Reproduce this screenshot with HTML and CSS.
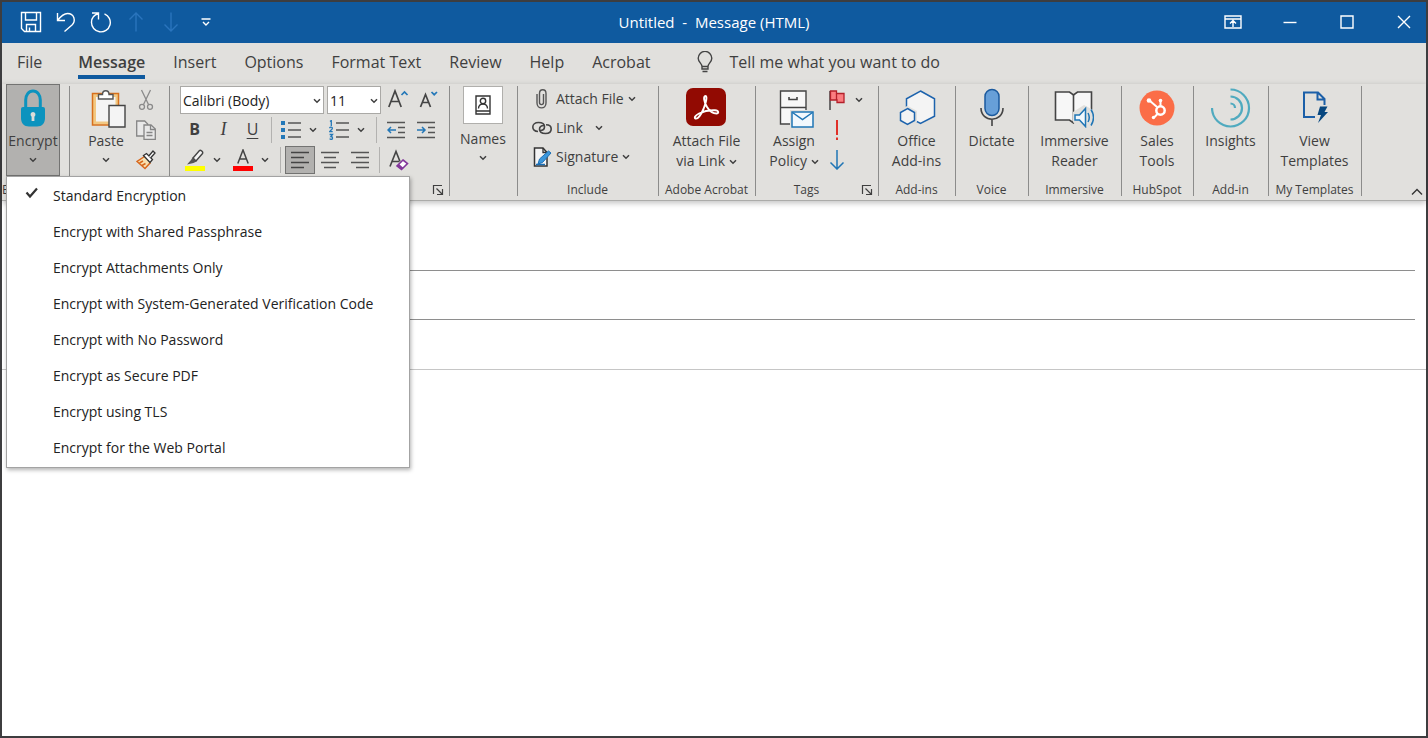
FILE: index.html
```html
<!DOCTYPE html>
<html lang="en">
<head>
    <meta charset="UTF-8">
    <meta name="viewport" content="width=device-width, initial-scale=1.0">
    <title>Untitled - Message (HTML)</title>
    <link rel="stylesheet" href="styles.css">
</head>
<body>
    <svg class="symbols" width="0" height="0" aria-hidden="true">
        <symbol id="chevron" viewBox="0 0 8 6"><path d="M1 1.2l3 3 3-3" fill="none" stroke="currentColor" stroke-width="1.5"/></symbol>
        <symbol id="launcher" viewBox="0 0 12 12"><path d="M1.5 10V1.500H10M4.500 4.500l5.500 5.500M10.500 5v5.500H5" fill="none" stroke="currentColor" stroke-width="1.200"/></symbol>
    </svg>

    <div class="window">
        <header class="titlebar">
            <div class="quick-access">
                <button aria-label="Save"><svg width="22" height="22" viewBox="0 0 22 22"><path d="M1.500 1.500h19v19H4.500l-3-3zM5.500 1.500v7.500h11V1.500M6.500 20.500v-7h9v7M9.500 20v-3.500" /></svg></button>
                <button aria-label="Undo"><svg width="22" height="22" viewBox="0 0 22 22"><path d="M2.500 2v7.500H10M2.500 9.500C6 5 9 2.500 12.500 2.500c7 0 8.500 7.500 4.500 11.500l-7.500 6.500"/></svg></button>
                <button aria-label="Redo"><svg width="22" height="22" viewBox="0 0 22 22"><path d="M2 2h6.500v6.500M8.500 2.500C4 4 1.500 7.500 1.500 11.200a9.400 9.400 0 1 0 13-8.400"/></svg></button>
                <button class="disabled" aria-label="Previous item" disabled><svg width="22" height="22" viewBox="0 0 22 22"><path d="M11 20.500V2M4.500 8.500L11 2l6.500 6.500"/></svg></button>
                <button class="disabled" aria-label="Next item" disabled><svg width="22" height="22" viewBox="0 0 22 22"><path d="M11 1.500V20M4.500 13.500L11 20l6.500-6.500"/></svg></button>
                <button aria-label="Customize toolbar"><svg width="10" height="8" viewBox="0 0 10 8"><path d="M.5 1h9M2 4l3 3 3-3"/></svg></button>
            </div>
            <h1 class="title">Untitled &nbsp;-&nbsp; Message (HTML)</h1>
            <div class="window-controls">
                <button aria-label="Ribbon display options"><svg width="18" height="14" viewBox="0 0 18 14"><path d="M1 1h16v12H1zM1 4h16M9 12V6M6 8.500l3-3 3 3"/></svg></button>
                <button aria-label="Minimize"><svg width="14" height="14" viewBox="0 0 14 14"><path d="M.5 7.500h13"/></svg></button>
                <button aria-label="Maximize"><svg width="14" height="14" viewBox="0 0 14 14"><path d="M1 1h12v12H1z"/></svg></button>
                <button aria-label="Close"><svg width="14" height="14" viewBox="0 0 14 14"><path d="M1 1l12 12M13 1L1 13"/></svg></button>
            </div>
        </header>

        <nav class="tabs">
            <a class="tab file" href="#">File</a>
            <a class="tab active" href="#">Message</a>
            <a class="tab" href="#">Insert</a>
            <a class="tab" href="#">Options</a>
            <a class="tab" href="#">Format Text</a>
            <a class="tab" href="#">Review</a>
            <a class="tab" href="#">Help</a>
            <a class="tab" href="#">Acrobat</a>
            <a class="tell-me" href="#">
                <svg width="16" height="22" viewBox="0 0 16 22" fill="none" stroke="#444" stroke-width="1.400"><path d="M5 15.500c0-3-3.800-4.500-3.800-8.300a6.800 6.800 0 0 1 13.600 0c0 3.800-3.800 5.300-3.800 8.300zM5 15.500V18h6v-2.500M5.500 20.500h5"/></svg>
                Tell me what you want to do
            </a>
        </nav>

        <div class="ribbon">
            <section class="group encrypt-group">
                <div class="tools">
                    <button class="big-button pressed">
                        <svg class="big-icon" viewBox="0 0 40 40"><path d="M12.700 21v-9c0-5 3-9 7.300-9s7.300 4 7.300 9v9" fill="none" stroke="#0c93be" stroke-width="3"/><path d="M10 19h20a2 2 0 0 1 2 2v9c0 5-3 8.500-8 8.500h-8c-5 0-8-3.500-8-8.500v-9a2 2 0 0 1 2-2z" fill="#0c93be"/><path d="M20 24a2.600 2.600 0 0 1 1.400 4.700V33h-2.800v-4.300A2.600 2.600 0 0 1 20 24z" fill="#dcdcd8"/></svg>
                        <span>Encrypt</span>
                        <svg class="chevron below"><use href="#chevron"/></svg>
                    </button>
                </div>
                <div class="group-label">E</div>
                <div class="menu" role="menu">
                    <button class="menu-item" role="menuitem"><svg width="14" height="12" viewBox="0 0 14 12"><path d="M1.500 5.500l3.500 4L12 1.500" fill="none" stroke="#333" stroke-width="2.200"/></svg>Standard Encryption</button>
                    <button class="menu-item" role="menuitem">Encrypt with Shared Passphrase</button>
                    <button class="menu-item" role="menuitem">Encrypt Attachments Only</button>
                    <button class="menu-item" role="menuitem">Encrypt with System-Generated Verification Code</button>
                    <button class="menu-item" role="menuitem">Encrypt with No Password</button>
                    <button class="menu-item" role="menuitem">Encrypt as Secure PDF</button>
                    <button class="menu-item" role="menuitem">Encrypt using TLS</button>
                    <button class="menu-item" role="menuitem">Encrypt for the Web Portal</button>
                </div>
            </section>

            <section class="group clipboard-group">
                <div class="tools">
                    <button class="big-button">
                        <svg class="big-icon" viewBox="0 0 40 40"><path d="M8.500 7.500h22.500v27.500H8.500z" fill="#f4f4f4" stroke="#f2c882" stroke-width="3"/><path d="M6.500 5.500h26v31.500h-26z" fill="none" stroke="#d8701c" stroke-width="1.500"/><path d="M12.500 11V6.500h4c0-5 6.500-5 6.500 0h4V11z" fill="#fff" stroke="#555" stroke-width="1.400"/><path d="M23 17.500h16v21.500H23z" fill="#f4f4f4" stroke="#444" stroke-width="1.400"/></svg>
                        <span>Paste</span>
                        <svg class="chevron below"><use href="#chevron"/></svg>
                    </button>
                    <div class="small-column">
                        <button class="icon-button" aria-label="Cut"><svg width="20" height="22" viewBox="0 0 20 22" fill="none" stroke="#8a8a8a" stroke-width="1.300"><path d="M5.500 1l7 14.500M14.500 1l-7 14.500"/><circle cx="6" cy="17.800" r="2.500"/><circle cx="14" cy="17.800" r="2.500"/></svg></button>
                        <button class="icon-button" aria-label="Copy"><svg width="20" height="20" viewBox="0 0 20 20" fill="#e8e8e8" stroke="#858585" stroke-width="1.300"><path d="M.7 1h8l3 3v12h-11z"/><path d="M8 5h7l4.300 4v10.300H8z"/><path d="M14.500 5v4.500h4.800M10.500 12.500h6M10.500 15.500h6" fill="none"/></svg></button>
                        <button class="icon-button" aria-label="Format painter"><svg width="20" height="20" viewBox="0 0 20 20"><path d="M8.500 6.500L1 11.500l8 7 5.500-6" fill="#f8e0b0" stroke="#d8671c" stroke-width="1.500"/><path d="M3.500 13l3.500-2M6 15.500l3.500-2" stroke="#d8671c" stroke-width="1.500"/><path d="M7.500 5.500l3-2 6 6-2.500 3z" fill="#fff" stroke="#333" stroke-width="1.300"/><path d="M12.800 6L17 1l2 2-4.500 5" fill="#fff" stroke="#333" stroke-width="1.300"/></svg></button>
                    </div>
                </div>
            </section>

            <section class="group text-group">
                <div class="tools rows">
                    <div class="row">
                        <label class="combo font-name">
                            <select aria-label="Font"><option>Calibri (Body)</option></select>
                            <svg class="chevron"><use href="#chevron"/></svg>
                        </label>
                        <label class="combo font-size">
                            <select aria-label="Font size"><option>11</option></select>
                            <svg class="chevron"><use href="#chevron"/></svg>
                        </label>
                        <button class="icon-button" aria-label="Grow font"><svg width="22" height="22" viewBox="0 0 22 22" fill="none" stroke-width="1.700"><path d="M.8 18L7 2l6.200 16M3 12.500h8" stroke="#444"/><path d="M13.500 6L16.500 3 19.500 6" stroke="#2478b8"/></svg></button>
                        <button class="icon-button" aria-label="Shrink font"><svg width="22" height="22" viewBox="0 0 22 22" fill="none" stroke-width="1.700"><path d="M2.500 18L7.500 5.500l5 12.500M4.200 13.500h6.600" stroke="#444"/><path d="M13.500 3L16.200 5.700 19 3" stroke="#2478b8"/></svg></button>
                    </div>
                    <div class="row">
                        <button class="icon-button letter bold">B</button>
                        <button class="icon-button letter italic">I</button>
                        <button class="icon-button letter underline">U</button>
                        <span class="divider"></span>
                        <button class="icon-button" aria-label="Bullets"><svg width="20" height="20" viewBox="0 0 20 20"><path d="M0 1h4v4H0zM0 8h4v4H0zM0 15h4v4H0z" fill="#2478b8"/><path d="M7 3h13M7 10h13M7 17h13" stroke="#555" stroke-width="1.500"/></svg></button>
                        <button class="arrow-button" aria-label="Bullet styles"><svg class="chevron"><use href="#chevron"/></svg></button>
                        <button class="icon-button" aria-label="Numbering"><svg width="20" height="20" viewBox="0 0 20 20" fill="none"><path d="M1 1.500l1.300-1V6M.5 8.200c.5-1.500 3-1.300 2.800.3-.1 1-1.600 1.700-2.600 3.200h3M.6 14.500h2.900l-1.600 2c2.300 0 2 2.900.3 2.900-.8 0-1.300-.3-1.600-.7" stroke="#2478b8" stroke-width="1.300"/><path d="M7 3h13M7 10h13M7 17h13" stroke="#555" stroke-width="1.500"/></svg></button>
                        <button class="arrow-button" aria-label="Number styles"><svg class="chevron"><use href="#chevron"/></svg></button>
                        <span class="divider"></span>
                        <button class="icon-button" aria-label="Decrease indent"><svg width="18" height="18" viewBox="0 0 18 18" fill="none" stroke-width="1.500"><path d="M0 1.500h18M11 6.500h7M11 11.500h7M0 16.500h18" stroke="#555"/><path d="M9 9H1M4 6L1 9l3 3" stroke="#2478b8"/></svg></button>
                        <button class="icon-button" aria-label="Increase indent"><svg width="18" height="18" viewBox="0 0 18 18" fill="none" stroke-width="1.500"><path d="M0 1.500h18M11 6.500h7M11 11.500h7M0 16.500h18" stroke="#555"/><path d="M0 9h8M5 6l3 3-3 3" stroke="#2478b8"/></svg></button>
                    </div>
                    <div class="row">
                        <button class="icon-button" aria-label="Highlight color"><svg width="20" height="22" viewBox="0 0 20 22"><path d="M0 17h20v5H0z" fill="#ff0"/><path d="M8 9L14.500 1.500c1-1 4 1.500 3 3L11 12z" fill="#f4f4f4" stroke="#444" stroke-width="1.400"/><path d="M7.500 8.500l4 4-3 1.500L2 15.500l4-4.500z" fill="#555"/></svg></button>
                        <button class="arrow-button" aria-label="Highlight colors"><svg class="chevron"><use href="#chevron"/></svg></button>
                        <button class="icon-button" aria-label="Font color"><svg width="20" height="22" viewBox="0 0 20 22"><path d="M0 17h20v5H0z" fill="#f00"/><path d="M4.800 14.500L10 1l5.200 13.500M6.700 10h6.600" fill="none" stroke="#444" stroke-width="1.500"/></svg></button>
                        <button class="arrow-button" aria-label="Font colors"><svg class="chevron"><use href="#chevron"/></svg></button>
                        <span class="divider"></span>
                        <button class="icon-button pressed" aria-label="Align left"><svg width="18" height="18" viewBox="0 0 18 18"><path d="M0 1.500h18M0 6.500h13M0 11.500h18M0 16.500h13" stroke="#444" stroke-width="1.500"/></svg></button>
                        <button class="icon-button" aria-label="Align center"><svg width="18" height="18" viewBox="0 0 18 18"><path d="M0 1.500h18M3 6.500h12M0 11.500h18M3 16.500h12" stroke="#555" stroke-width="1.500"/></svg></button>
                        <button class="icon-button" aria-label="Align right"><svg width="18" height="18" viewBox="0 0 18 18"><path d="M0 1.500h18M5 6.500h13M0 11.500h18M5 16.500h13" stroke="#555" stroke-width="1.500"/></svg></button>
                        <span class="divider"></span>
                        <button class="icon-button" aria-label="Clear formatting"><svg width="20" height="22" viewBox="0 0 20 22" fill="none"><path d="M1 17.500L7 2.500l4 10M3 12.500h7" stroke="#444" stroke-width="1.600"/><path d="M14 11l4.500 3.500-6 6L8 17z" fill="#fff" stroke="#83379b" stroke-width="1.600"/><path d="M10 15l4.500 4-2 1.500L8 17z" fill="#83379b"/></svg></button>
                    </div>
                </div>
                <div class="group-label"><span></span><button class="launcher" aria-label="Text options"><svg width="12" height="12"><use href="#launcher"/></svg></button></div>
            </section>

            <section class="group names-group">
                <div class="tools">
                    <button class="big-button">
                        <span class="names-icon"><svg width="16" height="20" viewBox="0 0 16 20" fill="none" stroke="#333" stroke-width="1.400"><path d="M1 1h14v18H1zM1 16h14"/><circle cx="8" cy="6" r="2.700"/><path d="M3.500 13.500c0-6 9-6 9 0"/></svg></span>
                        <span>Names</span>
                        <svg class="chevron below"><use href="#chevron"/></svg>
                    </button>
                </div>
            </section>

            <section class="group include-group">
                <div class="tools rows">
                    <button class="line-button"><svg width="20" height="20" viewBox="0 0 20 20" fill="none" stroke="#555" stroke-width="1.400"><path d="M5 5v9c0 6.500 9 6.500 9 0V4.500c0-5-6.500-5-6.500 0v9c0 2.800 4 2.800 4 0V5"/></svg>Attach File<svg class="chevron"><use href="#chevron"/></svg></button>
                    <button class="line-button link"><svg width="20" height="20" viewBox="0 0 20 20" fill="none" stroke="#444" stroke-width="1.600"><path d="M6 13.500C2.500 13.500.8 11.500.8 9S3 4.500 6.500 4.500s6 1.500 6 4.200-2.300 3.800-4.500 3.800"/><path d="M14 6.800c3.200 0 5.200 1.800 5.200 4.200s-2 4.500-5.700 4.500-6-1.500-6-4.200S9.800 7.500 12 7.500"/></svg>Link<svg class="chevron"><use href="#chevron"/></svg></button>
                    <button class="line-button"><svg width="20" height="20" viewBox="0 0 20 20"><path d="M2.500 1h8.500l4 4.500V19H2.500z" fill="#f4f4f4" stroke="#333" stroke-width="1.500"/><path d="M11 1v4.500h4" fill="none" stroke="#333" stroke-width="1.300"/><path d="M6 17l1.500-5L16.500 4l2.500 2-8.500 9.500z" fill="#3b97dc" stroke="#1b6fb5"/><path d="M4 17.500h9" stroke="#1b6fb5" stroke-width="1.500"/></svg>Signature<svg class="chevron"><use href="#chevron"/></svg></button>
                </div>
                <div class="group-label">Include</div>
            </section>

            <section class="group acrobat-group">
                <div class="tools">
                    <button class="big-button">
                        <svg class="big-icon" viewBox="0 0 40 40"><rect y="0" width="40" height="38" rx="7" fill="#920a02"/><path d="M19.500 8c-2.500 0-1.500 6 1.500 11 2.500 4 6.500 6.500 9.500 6.500 2.500 0 2.500-3-1.500-3.200-5-.3-11 .8-16 3.200-4 2-5 4.500-3.500 5 2.500.8 6-5 8-9.500 2.500-6 4-13 2-13z" fill="none" stroke="#fff" stroke-width="1.900"/></svg>
                        <span>Attach File<br>via Link <svg class="chevron"><use href="#chevron"/></svg></span>
                    </button>
                </div>
                <div class="group-label">Adobe Acrobat</div>
            </section>

            <section class="group tags-group">
                <div class="tools">
                    <button class="big-button">
                        <svg class="big-icon" viewBox="0 0 40 40"><path d="M6.500 3h25.500v33H6.500z" fill="#f7f7f7" stroke="#444" stroke-width="1.400"/><path d="M6.500 19.500H32M15 9v2.500h8V9" fill="none" stroke="#444" stroke-width="1.600"/><path d="M16 22h24v18H16z" fill="#e1e0dd"/><path d="M18 24h21v15H18z" fill="#f2f8fd" stroke="#1f75b5" stroke-width="1.500"/><path d="M18.500 24.500l10 7 10-7" fill="none" stroke="#1f75b5" stroke-width="1.500"/></svg>
                        <span>Assign<br>Policy <svg class="chevron"><use href="#chevron"/></svg></span>
                    </button>
                    <div class="small-column">
                        <div class="row">
                            <button class="icon-button" aria-label="Follow up"><svg width="16" height="20" viewBox="0 0 16 20"><path d="M1 1v19" stroke="#444" stroke-width="1.500"/><path d="M1.500 1h6v2.500H15V12.500H8V10H1.500z" fill="#fb7c80" stroke="#b3202a" stroke-width="1.300"/><path d="M7.500 3.500V10" stroke="#b3202a" stroke-width="1.300"/></svg></button>
                            <button class="arrow-button" aria-label="Follow up options"><svg class="chevron"><use href="#chevron"/></svg></button>
                        </div>
                        <button class="icon-button" aria-label="High importance"><svg width="4" height="20" viewBox="0 0 4 20"><path d="M2 0v15M2 17.500V20" stroke="#e03028" stroke-width="2"/></svg></button>
                        <button class="icon-button" aria-label="Low importance"><svg width="16" height="20" viewBox="0 0 16 20"><path d="M8 0v19M1.500 12.500L8 19l6.500-6.500" fill="none" stroke="#1f75b5" stroke-width="1.500"/></svg></button>
                    </div>
                </div>
                <div class="group-label"><span>Tags</span><button class="launcher" aria-label="Tag options"><svg width="12" height="12"><use href="#launcher"/></svg></button></div>
            </section>

            <section class="group addins-group">
                <div class="tools">
                    <button class="big-button">
                        <svg class="big-icon" viewBox="0 0 40 40" fill="#f4f4f4" stroke="#1d63ad" stroke-width="1.500"><path d="M23.500 3l14 7.800v17.400l-14 7.300-14-7.300V10.800z"/><path d="M10.500 20l7.500 4.200v8.300l-7.500 4.200L3 32.500v-8.300z" stroke="#e1e0dd" stroke-width="4"/><path d="M10.500 20.500l7 4v8l-7 4-7-4v-8z"/></svg>
                        <span>Office<br>Add-ins</span>
                    </button>
                </div>
                <div class="group-label">Add-ins</div>
            </section>

            <section class="group voice-group">
                <div class="tools">
                    <button class="big-button">
                        <svg class="big-icon" viewBox="0 0 40 40" fill="none"><rect x="13" y="1.500" width="14" height="26" rx="7" fill="#679fd8" stroke="#1b5a9e" stroke-width="1.500"/><path d="M9 20c0 15 22 15 22 0M20 31.500V38" stroke="#444" stroke-width="1.600"/></svg>
                        <span>Dictate</span>
                    </button>
                </div>
                <div class="group-label">Voice</div>
            </section>

            <section class="group immersive-group">
                <div class="tools">
                    <button class="big-button">
                        <svg class="big-icon" viewBox="0 0 40 40"><path d="M1.500 4h14l4 3 4-3h14v28h-14l-4 3-4-3h-14z" fill="#f7f7f7" stroke="#444" stroke-width="1.600"/><path d="M19.500 7v27" stroke="#444" stroke-width="1.600"/><path d="M19 24l11-7 11 6v17H24l-5-6z" fill="#e1e0dd"/><path d="M21 27h4.500l6-6.500v18l-6-6.500H21z" fill="#f2f8fd" stroke="#1f75b5" stroke-width="1.500"/><path d="M34 25q2.500 4.500 0 9M37 21.500q5 8 0 16" fill="none" stroke="#1f75b5" stroke-width="1.500"/></svg>
                        <span>Immersive<br>Reader</span>
                    </button>
                </div>
                <div class="group-label">Immersive</div>
            </section>

            <section class="group hubspot-group">
                <div class="tools">
                    <button class="big-button">
                        <svg class="big-icon" viewBox="0 0 40 40"><circle cx="20" cy="20" r="17.500" fill="#fb6d47"/><g fill="none" stroke="#fff"><circle cx="23.500" cy="22.500" r="4.200" stroke-width="2.500"/><path d="M12.500 12.500l7.500 6.500M23.500 18v-5M20.500 26l-3.500 3.500" stroke-width="2"/></g><g fill="#fff"><circle cx="12" cy="12.500" r="2.300"/><circle cx="23.500" cy="12.500" r="1.800"/><circle cx="16.500" cy="29.500" r="1.700"/></g></svg>
                        <span>Sales<br>Tools</span>
                    </button>
                </div>
                <div class="group-label">HubSpot</div>
            </section>

            <section class="group insights-group">
                <div class="tools">
                    <button class="big-button">
                        <svg class="big-icon" viewBox="0 0 40 40" fill="none" stroke="#50aabf" stroke-width="2.200"><path d="M19.500 1.500a18.500 18.500 0 1 1-18.500 18.500M19.500 8.500a11.500 11.500 0 0 1 0 23M19.500 15.500a4.500 4.500 0 0 1 4.500 4.500"/></svg>
                        <span>Insights</span>
                    </button>
                </div>
                <div class="group-label">Add-in</div>
            </section>

            <section class="group templates-group">
                <div class="tools">
                    <button class="big-button">
                        <svg class="big-icon" viewBox="0 0 40 40" fill="none" stroke="#1b5fa8" stroke-width="2"><path d="M20 29H9V4.500h14l6.500 6.500v6M22.500 4.500V11.500h7"/><path d="M25 18.500h7.500L29.500 24H33L23 35l3-8h-3.500z" fill="#07477f" stroke="none"/></svg>
                        <span>View<br>Templates</span>
                    </button>
                </div>
                <div class="group-label">My Templates</div>
            </section>

            <button class="collapse" aria-label="Collapse ribbon"><svg width="12" height="8" viewBox="0 0 12 8"><path d="M1 6.500l5-5 5 5" fill="none" stroke="#333" stroke-width="1.400"/></svg></button>
        </div>

        <main class="message">
            <div class="fields">
                <input class="field" aria-label="To">
                <input class="field" aria-label="Cc">
                <input class="field" aria-label="Subject">
            </div>
            <textarea class="body-text" aria-label="Message body"></textarea>
        </main>
    </div>
</body>
</html>
```
FILE: styles.css
```css
:root {
    --blue: #0f5a9f;
    --panel: #e1e0dd;
    --pressed: #b2b1af;
    --frame: #3d3d3f;
    --text: #3f3f3f;
    --line: #8c8c8b;
}

* {
    margin: 0;
    padding: 0;
    box-sizing: border-box;
}

body {
    font-family: "Open Sans", "Noto Sans", sans-serif;
    font-size: 14px;
    color: var(--text);
}

button {
    font: inherit;
    color: inherit;
    background: none;
    border: none;
}

svg {
    flex: none;
}

.symbols {
    position: absolute;
}

.window {
    display: flex;
    flex-direction: column;
    min-height: 100vh;
    border: 2px solid var(--frame);
    background: #fff;
}

/* Title bar */
.titlebar {
    display: grid;
    grid-template-columns: 1fr auto 1fr;
    align-items: center;
    height: 41px;
    padding-bottom: 2px;
    background: var(--blue);
    color: #fff;
}

.titlebar svg {
    fill: none;
    stroke: #fff;
    stroke-width: 1.4;
}

.titlebar button {
    display: flex;
    align-items: center;
    justify-content: center;
    height: 38px;
}

.quick-access {
    display: flex;
    padding-left: 11px;
}

.quick-access button {
    width: 35px;
}

.quick-access .disabled svg {
    stroke: #2a74bd;
}

.title {
    font-size: 15px;
    font-weight: 400;
}

.window-controls {
    display: flex;
    justify-content: flex-end;
    gap: 13px;
}

.window-controls button {
    width: 44px;
}

/* Tabs */
.tabs {
    display: flex;
    gap: 28px;
    height: 41px;
    padding-left: 15px;
    background: var(--panel);
    font-size: 16px;
    line-height: 38px;
}

.tabs a {
    color: inherit;
    text-decoration: none;
    white-space: nowrap;
}

.tab {
    height: 36px;
}

.tab.file {
    margin-right: 8px;
}

.tab.active {
    font-weight: 600;
    border-bottom: 4px solid var(--blue);
}

.tell-me {
    display: flex;
    align-items: center;
    gap: 17px;
    height: 38px;
    margin-left: 18px;
}

/* Ribbon */
.ribbon {
    position: relative;
    z-index: 1;
    display: flex;
    height: 117px;
    background: var(--panel);
    border-bottom: 1px solid #ababa9;
    box-shadow: 0 2px 6px rgba(0, 0, 0, 0.25);
}

.group {
    flex: none;
    position: relative;
    display: flex;
    flex-direction: column;
    padding-right: 2px;
}

.group::after {
    content: "";
    position: absolute;
    top: 2px;
    right: 0;
    width: 1px;
    height: 110px;
    background: var(--line);
}

.encrypt-group { width: 68px; }
.clipboard-group { width: 100px; }
.text-group { width: 280px; }
.names-group { width: 68px; }
.include-group { width: 141px; }
.acrobat-group { width: 97px; }
.tags-group { width: 123px; }
.addins-group { width: 77px; }
.voice-group { width: 73px; }
.immersive-group { width: 93px; }
.hubspot-group { width: 72px; }
.insights-group { width: 75px; }
.templates-group { width: 93px; }

.tools {
    display: flex;
    justify-content: center;
    height: 96px;
}

.tools.rows {
    flex-direction: column;
    justify-content: flex-start;
}

.encrypt-group .tools {
    justify-content: flex-start;
    padding-left: 4px;
}

.clipboard-group .tools {
    justify-content: flex-start;
    padding-left: 11px;
}

.tags-group .tools {
    justify-content: flex-start;
    padding-left: 10px;
}

.text-group .tools {
    padding: 1px 0 0 10px;
}

.group-label {
    display: flex;
    justify-content: center;
    font-size: 12px;
    line-height: 21px;
    white-space: nowrap;
    text-align: center;
}

.encrypt-group .group-label {
    justify-content: flex-start;
    width: 4px;
    overflow: hidden;
}

.text-group .group-label,
.tags-group .group-label {
    display: grid;
    grid-template-columns: 1fr 20px;
    height: 21px;
}

.launcher {
    display: flex;
    align-items: center;
    justify-content: center;
}

.big-button {
    display: flex;
    flex-direction: column;
    align-items: center;
    height: 92px;
    padding-top: 4px;
    line-height: 20px;
    white-space: nowrap;
}

.encrypt-group .big-button {
    width: 54px;
    padding-top: 3px;
}

.clipboard-group .big-button {
    width: 50px;
}

.tags-group .big-button {
    width: 56px;
}

.pressed {
    background: var(--pressed);
    border: 1px solid #737372;
}

.big-icon {
    width: 40px;
    height: 40px;
    margin-bottom: 3px;
}

.chevron {
    width: 8px;
    height: 6px;
    vertical-align: middle;
}

.chevron.below {
    margin-top: 6px;
}

.names-group .big-button {
    padding-top: 2px;
}

.names-icon {
    display: flex;
    align-items: center;
    justify-content: center;
    width: 40px;
    height: 38px;
    margin-bottom: 5px;
    border: 1px solid #b0afac;
    background: #fff;
}

.small-column {
    padding-top: 1px;
}

.row {
    display: flex;
    align-items: center;
    height: 30px;
}

.icon-button {
    display: flex;
    align-items: center;
    justify-content: center;
    width: 30px;
    height: 30px;
}

.arrow-button {
    display: flex;
    align-items: center;
    justify-content: center;
    width: 14px;
    height: 30px;
    margin-right: 4px;
}

.letter {
    width: 29px;
    padding-bottom: 2px;
    font-size: 16px;
}

.bold {
    font-weight: 700;
}

.italic {
    font-family: "Liberation Serif", serif;
    font-style: italic;
    font-size: 18px;
}

.underline {
    text-decoration: underline;
    text-underline-offset: 3px;
}

.icon-button.pressed {
    height: 28px;
}

.divider {
    width: 1px;
    height: 26px;
    margin: 0 4px;
    background: #b3b2b0;
}

.combo {
    position: relative;
    margin-right: 3px;
}

.combo select {
    width: 100%;
    height: 28px;
    padding-left: 2px;
    appearance: none;
    border: 1px solid #aaa9a6;
    border-radius: 0;
    background: #fff;
    color: #222;
    font: inherit;
}

.combo .chevron {
    position: absolute;
    top: 12px;
    right: 3px;
    pointer-events: none;
}

.font-name {
    width: 144px;
}

.font-size {
    width: 54px;
}

.line-button {
    display: flex;
    align-items: center;
    gap: 4px;
    height: 29px;
    padding-left: 14px;
    white-space: nowrap;
}

.line-button.link .chevron {
    margin-left: 8px;
}

.collapse {
    align-self: flex-end;
    margin-left: auto;
    padding: 0 3px 0;
}

/* Encrypt drop-down */
.menu {
    position: absolute;
    top: 92px;
    left: 4px;
    z-index: 2;
    width: 404px;
    padding-bottom: 2px;
    border: 1px solid #a3a3a3;
    background: #fff;
    box-shadow: 1px 2px 4px rgba(0, 0, 0, 0.3);
}

.menu-item {
    display: flex;
    align-items: center;
    width: 100%;
    height: 36px;
    padding-left: 46px;
    color: #222;
    text-align: left;
}

.menu-item svg {
    margin: 0 14px 4px -28px;
}

/* Message */
.message {
    flex: 1;
    display: flex;
    flex-direction: column;
}

.fields {
    display: flex;
    flex-direction: column;
    padding-top: 21px;
    border-bottom: 1px solid #c6c6c6;
}

.field {
    height: 49px;
    margin: 0 11px;
    border: none;
    border-bottom: 1px solid #8e8e8e;
    font: inherit;
}

.field:last-child {
    border-bottom: none;
}

.body-text {
    flex: 1;
    border: none;
    resize: none;
    font: inherit;
}
```
